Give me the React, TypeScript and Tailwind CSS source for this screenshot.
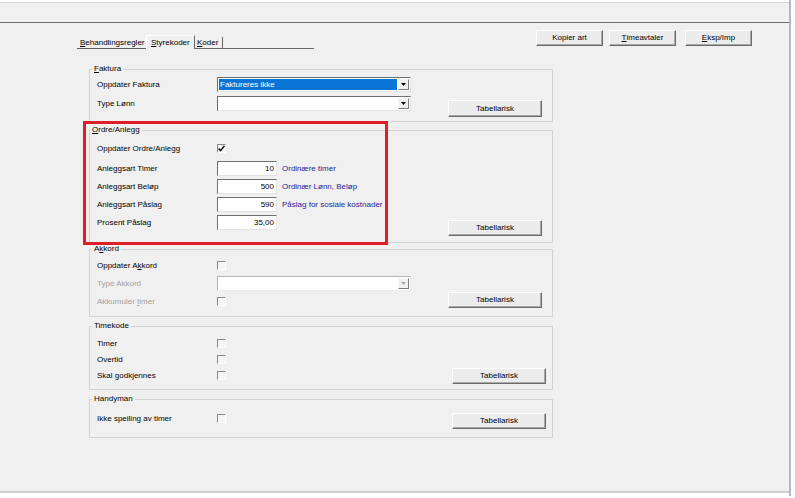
import React from "react";

type Kids = { children?: React.ReactNode };

function U({ children }: Kids) {
  return <span className="underline">{children}</span>;
}

function Btn({ children, className = "" }: Kids & { className?: string }) {
  return (
    <button
      type="button"
      className={`flex h-[16px] items-center justify-center border border-t-white border-l-white border-r-[#6a6a6a] border-b-[#6a6a6a] bg-[#ececec] leading-[10px] shadow-[inset_-1px_-1px_0_#a9a9a9] ${className}`}
    >
      {children}
    </button>
  );
}

function Check({ checked = false }: { checked?: boolean }) {
  return (
    <span className="flex h-[9px] w-[9px] items-center justify-center border border-t-[#8a8a8a] border-l-[#8a8a8a] border-r-white border-b-white bg-[#f5f5f5]">
      {checked && (
        <svg width="7" height="7" viewBox="0 0 7 7">
          <path d="M0.6 3.4 L2.6 5.6 L6.5 0.8" fill="none" stroke="#111" strokeWidth="1.5" />
        </svg>
      )}
    </span>
  );
}

function Field({ value }: { value: string }) {
  return (
    <div className="h-[15px] w-[60px] border border-t-[#6f6f6f] border-l-[#6f6f6f] border-r-[#e4e4e4] border-b-[#e4e4e4] bg-white pr-[2px] text-right leading-[13px]">
      {value}
    </div>
  );
}

function Select({ value = "", active = false, disabled = false }: { value?: string; active?: boolean; disabled?: boolean }) {
  return (
    <div
      className={`flex h-[15px] w-[194px] border bg-white p-[1px] ${
        disabled
          ? "border-t-[#b4b4b4] border-l-[#b4b4b4] border-r-[#ececec] border-b-[#ececec]"
          : "border-t-[#6f6f6f] border-l-[#6f6f6f] border-r-[#e4e4e4] border-b-[#e4e4e4]"
      }`}
    >
      <div className={`flex-1 pl-[1px] leading-[11px] ${active ? "bg-[#0a74d6] text-white" : ""}`}>{value}</div>
      <div className="ml-[1px] flex w-[11px] items-center justify-center border border-t-[#f8f8f8] border-l-[#f8f8f8] border-r-[#7a7a7a] border-b-[#7a7a7a] bg-[#f0f0f0]">
        <svg width="5" height="3" viewBox="0 0 5 3">
          <path d="M0 0H5L2.5 3Z" fill={disabled ? "#a8a8a8" : "#000"} />
        </svg>
      </div>
    </div>
  );
}

function Row({ label, dim = false, className = "", children }: Kids & { label: React.ReactNode; dim?: boolean; className?: string }) {
  return (
    <div className={`flex h-[15px] items-center ${className}`}>
      <span className={`w-[120px] ${dim ? "text-[#a2a2a2]" : ""}`}>{label}</span>
      {children}
    </div>
  );
}

function Group({
  title,
  className,
  bodyClass,
  btnClass,
  legendClass = "left-[2px]",
  children,
}: Kids & { title: React.ReactNode; className: string; bodyClass: string; btnClass: string; legendClass?: string }) {
  return (
    <div className={`relative ml-[89px] flex w-[464px] border border-[#d3d3d3] ${className}`}>
      <span className={`absolute -top-[6px] h-[10px] bg-[#f0f0f0] px-[2px] leading-[10px] ${legendClass}`}>{title}</span>
      <div className={`flex w-[358px] flex-col pl-[7px] ${bodyClass}`}>{children}</div>
      <Btn className={`w-[94px] self-end ${btnClass}`}>Tabellarisk</Btn>
    </div>
  );
}

export default function App() {
  return (
    <div className="relative flex h-[498px] w-[795px] overflow-hidden bg-white font-['Liberation_Sans',Arial,sans-serif] text-[8px] text-black">
      <div className="flex w-[789px] flex-col">
        <div className="h-[2px]" />
        <div className="h-[21px] border-t border-b border-t-[#d6d6d6] border-b-[#6e6e6e] bg-[#f0f0f0]" />
        <div className="flex h-[470px] flex-col border-b-2 border-[#d0d0d0] bg-[#f0f0f0] pt-[7px]">
          {/* tabs + top buttons */}
          <div className="flex h-[19px] items-start">
            <div className="mt-[5px] ml-[77px] flex h-[14px] w-[237px] items-end">
              <div className="h-[12px] w-[69px] border-b border-[#5e5e5e] pl-[3px] leading-[11px]">
                <U>B</U>ehandlingsregler
              </div>
              <div className="h-[14px] w-[49px] border-t border-l border-r border-t-white border-l-white border-r-[#6a6a6a] pl-[4px] pt-[1px] leading-[11px]">
                <U>S</U>tyrekoder
              </div>
              <div className="h-[12px] w-[28px] border-r border-b border-[#6a6a6a] pl-[2px] leading-[11px]">
                <U>K</U>oder
              </div>
              <div className="h-[12px] flex-1 border-b border-[#6a6a6a]" />
            </div>
            <Btn className="ml-[222px] w-[67px]">Kopier art</Btn>
            <Btn className="ml-[6px] w-[67px]">
              <U>T</U>imeavtaler
            </Btn>
            <Btn className="ml-[9px] w-[67px]">
              <U>E</U>ksp/Imp
            </Btn>
          </div>

          <Group
            title={<><U>F</U>aktura</>}
            className="mt-[20px] h-[53px]"
            bodyClass="gap-[4px] pt-[7px]"
            btnClass="mb-[4px] h-[17px]"
          >
            <Row label="Oppdater Faktura">
              <Select value="Faktureres ikke" active />
            </Row>
            <Row label="Type Lønn">
              <Select />
            </Row>
          </Group>

          <Group
            title={<><U>O</U>rdre/Anlegg</>}
            className="mt-[8px] h-[113px]"
            bodyClass="gap-[3px] pt-[10px]"
            btnClass="mb-[6px]"
            legendClass="left-0"
          >
            <Row label="Oppdater Ordre/Anlegg">
              <Check checked />
            </Row>
            <Row label="Anleggsart Timer" className="mt-[2px]">
              <Field value="10" />
              <span className="ml-[5px] text-[#25259c]">Ordinære timer</span>
            </Row>
            <Row label="Anleggsart Beløp">
              <Field value="500" />
              <span className="ml-[5px] text-[#25259c]">Ordinær Lønn, Beløp</span>
            </Row>
            <Row label="Anleggsart Påslag">
              <Field value="590" />
              <span className="ml-[5px] text-[#25259c]">Påslag for sosiale kostnader</span>
            </Row>
            <Row label="Prosent Påslag">
              <Field value="35,00" />
            </Row>
          </Group>

          <Group
            title={<>A<U>k</U>kord</>}
            className="mt-[6px] h-[68px]"
            bodyClass="gap-[3px] pt-[8px]"
            btnClass="mb-[8px]"
          >
            <Row label={<>Oppdater A<U>k</U>kord</>}>
              <Check />
            </Row>
            <Row label="Type Akkord" dim>
              <Select disabled />
            </Row>
            <Row label={<>Akkumuler <U>t</U>imer</>} dim>
              <Check />
            </Row>
          </Group>

          <Group
            title="Timekode"
            className="mt-[9px] h-[64px]"
            bodyClass="gap-[1px] pt-[9px]"
            btnClass="mb-[5px] ml-[4px]"
          >
            <Row label="Timer">
              <Check />
            </Row>
            <Row label="Overtid">
              <Check />
            </Row>
            <Row label="Skal godkjennes">
              <Check />
            </Row>
          </Group>

          <Group
            title="Handyman"
            className="mt-[9px] h-[39px]"
            bodyClass="pt-[11px]"
            btnClass="mb-[8px] ml-[4px]"
          >
            <Row label="Ikke speiling av timer">
              <Check />
            </Row>
          </Group>
        </div>
      </div>
      <div className="h-[496px] w-[2px] bg-[#a6bbd1]" />

      {/* red highlight drawn on top of the form */}
      <div className="pointer-events-none absolute top-[121px] left-[83px] h-[124px] w-[305px] border-[3px] border-[#df1f28]" />
    </div>
  );
}
